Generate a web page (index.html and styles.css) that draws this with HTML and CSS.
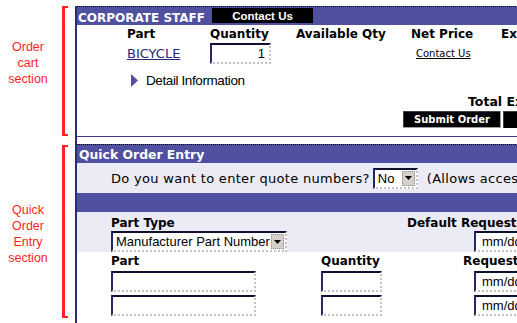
FILE: index.html
```html
<!DOCTYPE html>
<html lang="en">
<head>
<meta charset="utf-8">
<title>Order cart</title>
<link rel="stylesheet" href="styles.css">
</head>
<body>
<div class="page">
  <aside class="notes">
    <div class="note note-cart">
      <div class="note-text">Order<br>cart<br>section</div>
      <div class="bracket"></div>
    </div>
    <div class="note note-quick">
      <div class="note-text">Quick<br>Order<br>Entry<br>section</div>
      <div class="bracket"></div>
    </div>
  </aside>
  <main class="frame">
    <section class="cart">
      <div class="bar">
        <span class="bar-title">CORPORATE STAFF</span>
        <span class="btn btn-contact">Contact Us</span>
      </div>
      <div class="cart-body">
        <div class="cart-grid">
          <span class="th">Part</span>
          <span class="th">Quantity</span>
          <span class="th">Available Qty</span>
          <span class="th">Net Price</span>
          <span class="th">Extended Price</span>
          <a class="part-link" href="#">BICYCLE</a>
          <input class="field qty" type="text" value="1">
          <span></span>
          <a class="price-link" href="#">Contact Us</a>
          <span></span>
        </div>
        <div class="detail">
          <svg class="tri" width="7" height="13" viewBox="0 0 7 13"><polygon points="0,0 7,6.5 0,13" fill="#5050a0"/></svg>
          <span>Detail Information</span>
        </div>
        <div class="total">Total Extended Price</div>
        <div class="actions">
          <span class="btn btn-submit">Submit Order</span>
          <span class="btn btn-next">Save Cart</span>
        </div>
      </div>
    </section>
    <div class="sep"></div>
    <section class="quick">
      <div class="bar bar-quick">
        <span class="bar-title">Quick Order Entry</span>
      </div>
      <div class="q-quote">
        <span class="q-question">Do you want to enter quote numbers?</span>
        <span class="select select-no">
          <span class="select-text">No</span>
          <span class="select-arrow"><svg width="7" height="4" viewBox="0 0 7 4"><polygon points="0,0 7,0 3.5,4" fill="#000"/></svg></span>
        </span>
        <span class="q-note">(Allows access to quote pricing)</span>
      </div>
      <div class="q-bar"></div>
      <div class="q-type">
        <span class="th">Part Type</span>
        <span class="th">Default Requested Date</span>
        <span class="select select-type">
          <span class="select-text">Manufacturer Part Number</span>
          <span class="select-arrow"><svg width="7" height="4" viewBox="0 0 7 4"><polygon points="0,0 7,0 3.5,4" fill="#000"/></svg></span>
        </span>
        <input class="field date date-default" type="text" value="mm/dd/yyyy">
      </div>
      <div class="q-items">
        <span class="th">Part</span>
        <span class="th">Quantity</span>
        <span class="th">Requested Date</span>
        <input class="field part" type="text" value="">
        <input class="field q-qty" type="text" value="">
        <input class="field date" type="text" value="mm/dd/yyyy">
        <input class="field part" type="text" value="">
        <input class="field q-qty" type="text" value="">
        <input class="field date" type="text" value="mm/dd/yyyy">
      </div>
    </section>
  </main>
</div>
</body>
</html>
```
FILE: styles.css
```css
html, body {
  margin: 0;
  padding: 0;
  background: #ffffff;
}

body {
  overflow: hidden;
  width: 517px;
  height: 323px;
  font-family: "DejaVu Sans", Verdana, sans-serif;
  color: #000;
}

.page {
  display: flex;
  width: 760px;
  padding-top: 6px;
}

/* annotation column */
.notes {
  width: 75px;
  flex-shrink: 0;
}

.note {
  display: flex;
}

.note-cart {
  height: 130px;
}

.note-quick {
  height: 173px;
  margin-top: 9px;
}

.note-text {
  width: 56px;
  padding-right: 6px;
  text-align: center;
  color: #ff1f1f;
  font-family: "Liberation Sans", Arial, sans-serif;
  font-size: 12.5px;
  line-height: 16px;
}

.note-cart .note-text {
  padding-top: 33px;
}

.note-quick .note-text {
  padding-top: 57px;
}

.bracket {
  width: 3px;
  border-left: 3px solid #ff2222;
  border-top: 2px solid #ff2222;
  border-bottom: 2px solid #ff2222;
  height: calc(100% - 4px);
}

/* main frame */
.frame {
  flex: 1;
  min-height: 340px;
  border-left: 2px solid #2c2c70;
  white-space: nowrap;
}

.bar {
  display: flex;
  align-items: flex-start;
  height: 19px;
  box-sizing: border-box;
  background: #5050a0;
  border-top: 1px dotted #000;
  padding-left: 1px;
}

.bar-title {
  color: #fff;
  font-weight: bold;
  font-size: 12px;
  line-height: 14px;
  padding-top: 4px;
}

.bar-quick .bar-title {
  padding-top: 3px;
  padding-left: 1px;
  font-size: 12.4px;
}

.btn {
  display: inline-flex;
  align-items: center;
  justify-content: center;
  box-sizing: border-box;
  background: #000;
  color: #fff;
  font-weight: bold;
  font-size: 10px;
}

.btn-contact {
  width: 101px;
  height: 15px;
  margin-left: 7px;
  margin-top: 1px;
  font-family: "Liberation Sans", Arial, sans-serif;
  font-size: 11.5px;
}

.btn-submit {
  width: 98px;
  height: 17px;
  box-shadow: inset -1px -1px 0 #a0a0a0, inset 1px 1px 0 #404040;
}

.btn-next {
  width: 90px;
  height: 17px;
  margin-left: 2px;
  box-shadow: inset 1px 1px 0 #404040;
}

/* cart body */
.cart-body {
  height: 111px;
  box-sizing: border-box;
  padding: 2px 0 0 50px;
}

.cart-grid {
  display: grid;
  grid-template-columns: 83px 86px 115px 90px 120px;
  row-gap: 2px;
  align-items: center;
}

.th {
  font-weight: bold;
  font-size: 12px;
  line-height: 14px;
}

.part-link {
  color: #26267a;
  font-size: 13px;
  text-decoration: underline;
}

.price-link {
  color: #000;
  font-size: 10px;
  text-decoration: underline;
  padding-left: 5px;
}

.field {
  box-sizing: border-box;
  height: 21px;
  margin: 0;
  padding: 0 4px;
  background: #fff;
  border-top: 2px solid #101030;
  border-left: 2px solid #262664;
  border-right: 2px dotted #c4c4c4;
  border-bottom: 2px dotted #c4c4c4;
  font-family: "Liberation Sans", Arial, sans-serif;
  font-size: 13px;
  color: #000;
  outline: none;
}

.qty {
  width: 61px;
  text-align: right;
}

.detail {
  display: flex;
  align-items: center;
  height: 16px;
  margin-top: 8px;
  padding-left: 4px;
  font-family: "Liberation Sans", Arial, sans-serif;
  font-size: 13.5px;
  letter-spacing: -0.4px;
}

.tri {
  display: block;
  margin-right: 8px;
}

.total {
  margin-top: 7px;
  padding-left: 341px;
  font-weight: bold;
  font-size: 12.5px;
  line-height: 14px;
}

.actions {
  display: flex;
  margin-top: 2px;
  padding-left: 276px;
}

.sep {
  height: 1px;
  background: #3c3c8c;
  margin-bottom: 7px;
}

/* quick order entry */
.q-quote {
  display: flex;
  align-items: center;
  height: 30px;
  background: #ebebf5;
  padding-left: 34px;
  font-size: 13px;
  letter-spacing: 0.3px;
}

.select {
  display: inline-flex;
  align-items: stretch;
  box-sizing: border-box;
  height: 21px;
  background: #fff;
  border-top: 2px solid #101030;
  border-left: 2px solid #262664;
  border-right: 2px dotted #c4c4c4;
  border-bottom: 2px dotted #c4c4c4;
  font-family: "Liberation Sans", Arial, sans-serif;
  font-size: 13px;
  letter-spacing: 0;
}

.select-text {
  flex: 1;
  line-height: 17px;
  padding-left: 3px;
}

.select-arrow {
  display: flex;
  align-items: center;
  justify-content: center;
  width: 11px;
  margin: 1px 1px 1px 0;
  background: #d4d0c8;
  border: 1px dotted #8a8a8a;
}

.select-no {
  width: 45px;
  margin-left: 3px;
}

.q-note {
  margin-left: 9px;
}

.q-bar {
  height: 19px;
  background: #5050a0;
}

.q-type {
  display: grid;
  grid-template-columns: 296px auto;
  row-gap: 1px;
  height: 40px;
  box-sizing: border-box;
  padding: 4px 0 0 34px;
  background: #ebebf5;
}

.select-type {
  width: 176px;
}

.date {
  width: 110px;
  padding-left: 6px;
  margin-left: 11px;
}

.date-default {
  margin-left: 67px;
}

.q-items {
  display: grid;
  grid-template-columns: 210px 142px auto;
  row-gap: 3px;
  padding: 2px 0 0 34px;
}

.part {
  width: 145px;
}

.q-qty {
  width: 61px;
}
```
